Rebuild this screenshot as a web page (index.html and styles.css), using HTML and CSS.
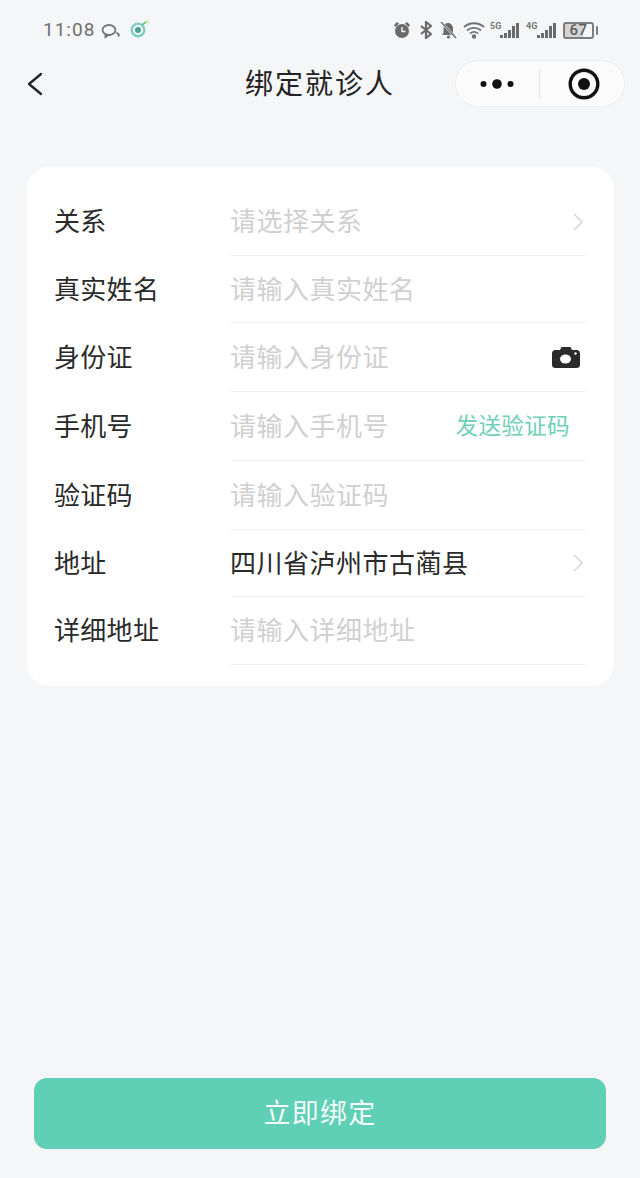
FILE: index.html
```html
<!DOCTYPE html>
<html lang="zh-CN">
<head>
<meta charset="utf-8">
<title>绑定就诊人</title>
<link rel="stylesheet" href="styles.css">
</head>
<body>
<div class="page">
  <header class="status">
    <div class="status-left">
      <span class="time">11:08</span>
      <svg class="ic-chat" viewBox="0 0 20 16" fill="none" stroke="#757575" stroke-width="1.800"><ellipse cx="8" cy="7" rx="6.500" ry="5"/><path d="M4.500 11v3l3-2"/><path d="M15 10.500a2 2 0 0 1 3 1.500l-1 1.500"/></svg>
      <svg class="ic-app" viewBox="0 0 20 18"><circle cx="9" cy="10" r="6.300" fill="none" stroke="#7fcfc0" stroke-width="2.400"/><circle cx="9" cy="10" r="3" fill="#4e9f90"/><path d="M13 5l4-3" stroke="#73c58c" stroke-width="2"/><path d="M16 1.500h3v2" stroke="#d8e28f" stroke-width="1.500" fill="none"/></svg>
    </div>
    <div class="status-right">
      <svg class="ic-alarm" viewBox="0 0 18 18"><circle cx="9" cy="10" r="7" fill="#6a6a6a"/><path d="M1 4l3-3 2 1.500-3.500 3.500zM17 4l-3-3-2 1.500 3.500 3.500z" fill="#6a6a6a"/><path d="M9 6v4.500h3.500" stroke="#f5f6f8" stroke-width="1.500" fill="none"/></svg>
      <svg class="ic-bt" viewBox="0 0 12 18" fill="none" stroke="#6a6a6a" stroke-width="2.200"><path d="M1 5l10 8-5 4V1l5 4-10 8"/></svg>
      <svg class="ic-bell" viewBox="0 0 17 18"><path d="M8 2c3 0 5 2.500 5 5.500V12l2 2H2l1.500-2V7.500C3.500 4.500 5 2 8 2z" fill="#6a6a6a"/><circle cx="8.500" cy="16" r="1.600" fill="#6a6a6a"/><path d="M1 1l15 16" stroke="#f5f6f8" stroke-width="2.500"/><path d="M1 1l15 16" stroke="#6a6a6a" stroke-width="1.300"/></svg>
      <svg class="ic-wifi" viewBox="0 0 22 18" fill="none" stroke="#707070" stroke-width="1.800"><path d="M1 6c5.500-5 14.500-5 20 0"/><path d="M4 9.500c4-3.500 10-3.500 14 0"/><path d="M7 12.500c2.500-2 5.500-2 8 0"/><circle cx="11" cy="15.500" r="1.300" fill="#707070"/></svg>
      <div class="signal signal-5g">
        <span class="net">5G</span>
        <span class="bars"><i class="b1"></i><i class="b2"></i><i class="b3"></i><i class="b4"></i><i class="b5"></i></span>
      </div>
      <div class="signal signal-4g">
        <span class="net">4G</span>
        <span class="bars"><i class="b1"></i><i class="b2"></i><i class="b3"></i><i class="b4"></i><i class="b5"></i></span>
      </div>
      <div class="battery"><span class="battery-body">67</span><span class="battery-cap"></span></div>
    </div>
  </header>

  <nav class="nav">
    <svg class="back" viewBox="0 0 16 24" fill="none" stroke="#222" stroke-width="2.300" stroke-linecap="round" stroke-linejoin="round"><path d="M14 2L2 12l12 10"/></svg>
    <h1 class="title">绑定就诊人</h1>
    <div class="capsule">
      <svg class="dots" viewBox="0 0 36 12" fill="#111"><circle cx="4.500" cy="6" r="3"/><circle cx="18" cy="6" r="4.800"/><circle cx="31.500" cy="6" r="3"/></svg>
      <span class="capsule-line"></span>
      <svg class="target" viewBox="0 0 32 32"><circle cx="16" cy="16" r="13.800" fill="none" stroke="#111" stroke-width="3.400"/><circle cx="16" cy="16" r="6" fill="#111"/></svg>
    </div>
  </nav>

  <main class="card">
    <div class="row row-68">
      <span class="label">关系</span>
      <div class="field"><span class="ph">请选择关系</span>
        <svg class="chev" viewBox="0 0 10 18" fill="none" stroke="#d8d8d8" stroke-width="1.600"><path d="M1 1l8 8-8 8"/></svg></div>
    </div>
    <div class="row row-67">
      <span class="label">真实姓名</span>
      <div class="field"><span class="ph">请输入真实姓名</span></div>
    </div>
    <div class="row row-69">
      <span class="label">身份证</span>
      <div class="field"><span class="ph">请输入身份证</span>
        <svg class="camera" viewBox="0 0 28 22"><path d="M3.500 4H8l1.500-3h9L20 4h4.500A3.500 3.500 0 0 1 28 7.500v11a3.500 3.500 0 0 1-3.500 3.500h-21A3.500 3.500 0 0 1 0 18.500v-11A3.500 3.500 0 0 1 3.500 4z" fill="#2b2b2b"/><ellipse cx="13.500" cy="13" rx="5.500" ry="4.500" fill="#fff"/><circle cx="23.500" cy="7.500" r="1.200" fill="#fff"/></svg></div>
    </div>
    <div class="row row-69">
      <span class="label">手机号</span>
      <div class="field"><span class="ph">请输入手机号</span><span class="send">发送验证码</span></div>
    </div>
    <div class="row row-69">
      <span class="label">验证码</span>
      <div class="field"><span class="ph">请输入验证码</span></div>
    </div>
    <div class="row row-67">
      <span class="label">地址</span>
      <div class="field"><span class="val">四川省泸州市古蔺县</span>
        <svg class="chev" viewBox="0 0 10 18" fill="none" stroke="#d8d8d8" stroke-width="1.600"><path d="M1 1l8 8-8 8"/></svg></div>
    </div>
    <div class="row row-68">
      <span class="label">详细地址</span>
      <div class="field"><span class="ph">请输入详细地址</span></div>
    </div>
  </main>

  <button class="submit" type="button">立即绑定</button>
</div>
</body>
</html>
```

FILE: styles.css
```css
* { box-sizing: border-box; }
html, body { margin: 0; padding: 0; }
body {
  background: #f5f6f8;
  font-family: "Noto Sans CJK SC", "Noto Sans", sans-serif;
}
.page {
  width: 640px;
  height: 1178px;
  display: flex;
  flex-direction: column;
  overflow: hidden;
}

/* status bar */
.status {
  height: 60px;
  flex: none;
  padding: 19px 42px 0 43px;
  display: flex;
  justify-content: space-between;
  align-items: flex-start;
}
.status-left, .status-right { display: flex; align-items: center; height: 22px; }
.time {
  font-family: Roboto, sans-serif;
  font-size: 19px;
  font-weight: 400;
  letter-spacing: 1px;
  color: #6f6f6f;
  line-height: 22px;
}
.ic-chat { width: 20px; height: 16px; margin-left: 6px; margin-top: 2px; }
.ic-app { width: 20px; height: 18px; margin-left: 8px; margin-top: -2px; }
.ic-alarm { width: 18px; height: 18px; }
.ic-bt { width: 12px; height: 18px; margin-left: 9px; }
.ic-bell { width: 17px; height: 18px; margin-left: 8px; }
.ic-wifi { width: 22px; height: 18px; margin-left: 6px; }
.signal { display: flex; align-items: flex-end; height: 16px; }
.signal-5g { margin-left: 5px; width: 29px; }
.signal-4g { margin-left: 7px; width: 30px; }
.signal-4g .net { width: 11px; }
.net {
  font-family: Roboto, sans-serif;
  font-size: 9px;
  font-weight: 700;
  color: #777;
  line-height: 8px;
  align-self: flex-start;
  width: 10px;
  flex: none;
}
.bars { display: flex; align-items: flex-end; gap: 1px; }
.bars i { display: block; width: 3px; background: #6a6a6a; }
.b1 { height: 3px; }
.b2 { height: 5px; }
.b3 { height: 8px; }
.b4 { height: 12px; }
.b5 { height: 15px; }
.battery { display: flex; align-items: center; margin-left: 7px; }
.battery-body {
  width: 31px;
  height: 17px;
  border: 2px solid #7d7d7d;
  border-radius: 3px;
  font-family: Roboto, sans-serif;
  font-size: 15px;
  font-weight: 500;
  line-height: 13px;
  letter-spacing: 0.5px;
  text-align: center;
  color: #5f5f5f;
  background: linear-gradient(90deg, #d4d4d4 0 67%, transparent 67%);
}
.battery-cap { width: 2px; height: 9px; margin-left: 2px; background: #7d7d7d; border-radius: 1px; }

/* navigation */
.nav {
  position: relative;
  flex: none;
  height: 47px;
  display: flex;
  align-items: center;
  padding: 0 15px 0 27px;
  justify-content: space-between;
}
.back { width: 16px; height: 24px; }
.title {
  position: absolute;
  left: 0;
  right: 0;
  top: -1px;
  margin: 0;
  text-align: center;
  font-size: 28px;
  font-weight: 400;
  letter-spacing: 2px;
  color: #222;
  line-height: 47px;
  pointer-events: none;
}
.capsule {
  width: 170px;
  height: 47px;
  border-radius: 24px;
  background: #fbfbfc;
  border: 1px solid #eeeff1;
  display: flex;
  align-items: center;
  padding: 0 23px;
}
.dots { width: 36px; height: 12px; }
.capsule-line { width: 1px; height: 30px; background: #e4e4e4; margin-left: 24px; }
.target { width: 32px; height: 32px; margin-left: 28px; }

/* card */
.card {
  flex: none;
  width: 587px;
  margin: 60px 0 0 27px;
  padding: 21px 27px 21px 27px;
  background: #fff;
  border-radius: 22px;
}
.row { display: flex; }
.row-67 { height: 67px; }
.row-68 { height: 68px; }
.row-69 { height: 69px; }
.label {
  width: 177px;
  flex: none;
  font-size: 26px;
  letter-spacing: 0.300px;
  color: #2a2a2a;
  line-height: 32px;
  padding-bottom: 4px;
  height: 36px;
  align-self: center;
}
.field {
  flex: 1;
  display: flex;
  align-items: center;
  justify-content: space-between;
  border-bottom: 1px solid #f2f2f2;
  font-size: 26px;
  letter-spacing: 0.500px;
  line-height: 32px;
  margin-left: -1px;
  padding-bottom: 3px;
}
.ph { color: #d0d0d0; }
.val { color: #2a2a2a; }
.chev { width: 10px; height: 18px; margin-right: 4px; margin-top: 3px; }
.camera { width: 28px; height: 22px; margin-right: 7px; margin-top: 3px; }
.send {
  font-size: 22.600px;
  letter-spacing: 0.300px;
  color: #6fd0b8;
  margin-right: 17px;
}

/* submit */
.submit {
  width: 572px;
  height: 71px;
  margin: auto 0 29px 34px;
  padding: 0 0 5px;
  border: 0;
  border-radius: 13px;
  background: #5fcfb5;
  color: #f4fbf9;
  font-family: inherit;
  font-size: 27px;
  letter-spacing: 1.300px;
  flex: none;
}
```
